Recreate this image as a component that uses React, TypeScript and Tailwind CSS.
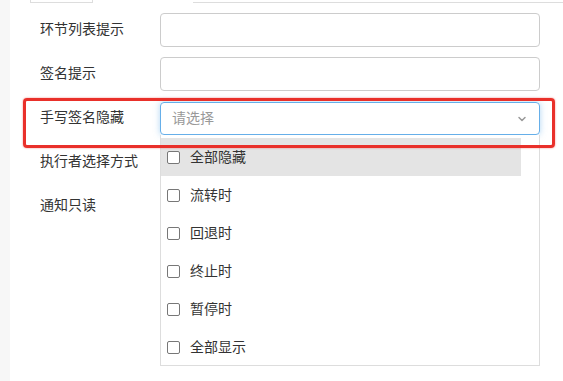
import { ChevronDown } from 'lucide-react';

const font = { fontFamily: '"Microsoft YaHei", "Noto Sans CJK SC", "Liberation Sans", sans-serif' };

const options = ['全部隐藏', '流转时', '回退时', '终止时', '暂停时', '全部显示'];

const Row = ({ label, children }: { label: string; children?: React.ReactNode }) => (
    <div className="flex items-center h-[34px]">
        <div className="w-[150px] pl-[30px] shrink-0 whitespace-nowrap text-[14px] text-[#333] leading-none pb-[4px]">{label}</div>
        <div className="w-[380px]">{children}</div>
    </div>
);

export default function App() {
    return (
        <div className="relative flex w-[563px] h-[381px] bg-white overflow-hidden" style={font}>
            {/* left gutter */}
            <div className="w-[10px] shrink-0 bg-[#f7f7f7]" />

            <div className="flex-1 flex flex-col">
                {/* tab strip remains */}
                <div className="flex h-[3px]">
                    <div className="w-[20px]" />
                    <div className="w-[63px] border-x border-b border-[#ddd]" />
                    <div className="w-[100px]" />
                    <div className="flex-1 border-b border-[#ddd]" />
                </div>

                <div className="flex flex-col gap-[10px] pt-[10px]">
                    <Row label="环节列表提示">
                        <div className="h-[34px] border border-[#ccc] rounded-[4px]" />
                    </Row>
                    <Row label="签名提示">
                        <div className="h-[34px] border border-[#ccc] rounded-[4px]" />
                    </Row>
                    <Row label="手写签名隐藏">
                        <div className="h-[33px] mt-[1px] flex items-center justify-between px-[11px] border border-[#66afe9] rounded-[4px] shadow-[0_0_6px_rgba(102,175,233,0.5)]">
                            <span className="text-[14px] text-[#999] leading-none pb-[3px]">请选择</span>
                            <ChevronDown className="w-[12px] h-[12px] text-[#999]" strokeWidth={3} />
                        </div>
                    </Row>
                    <Row label="执行者选择方式" />
                    <Row label="通知只读" />
                </div>
            </div>

            {/* dropdown menu */}
            <div className="absolute left-[160px] top-[135px] w-[380px] h-[231px] bg-white border-x border-b border-[#ddd] pt-[3px]">
                {options.map((opt, i) => (
                    <div
                        key={opt}
                        className={`flex items-center w-[360px] h-[38px] pl-[6px] gap-[10px] text-[14px] text-[#333] ${i === 0 ? 'bg-[#e4e4e4]' : ''}`}
                    >
                        <span className="w-[13px] h-[13px] border border-[#777] rounded-[2px] bg-white" />
                        <span className="leading-none pb-[3px]">{opt}</span>
                    </div>
                ))}
            </div>

            {/* red annotation */}
            <div className="absolute left-[23px] top-[98px] w-[532px] h-[50px] border-[3px] border-[#e9302a] rounded-[4px] shadow-[0_0_2px_rgba(233,48,42,0.6)]" />
        </div>
    );
}
